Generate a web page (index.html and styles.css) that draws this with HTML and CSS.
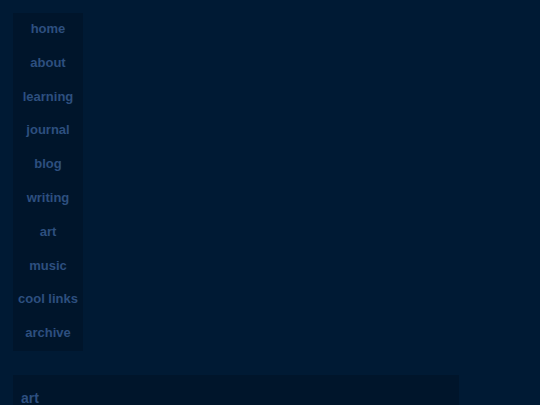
FILE: index.html
```html
<!DOCTYPE html>
<html>
<head>
<meta charset="utf-8">
<link rel="stylesheet" href="styles.css">
</head>
<body>
<div class="page">
  <nav class="nav">
    <a class="nav-item">home</a>
    <a class="nav-item">about</a>
    <a class="nav-item">learning</a>
    <a class="nav-item">journal</a>
    <a class="nav-item">blog</a>
    <a class="nav-item">writing</a>
    <a class="nav-item">art</a>
    <a class="nav-item">music</a>
    <a class="nav-item">cool links</a>
    <a class="nav-item">archive</a>
  </nav>
  <main class="content">
    <h2 class="title">art</h2>
  </main>
</div>
</body>
</html>
```
FILE: styles.css
```css
html, body {
  margin: 0;
  padding: 0;
  background: #001a34;
  height: 100%;
  overflow: hidden;
}
.page {
  padding: 13px;
  display: flex;
  flex-direction: column;
  gap: 24px;
  font-family: "Liberation Sans", Arial, sans-serif;
}
.nav {
  width: 70px;
  background: #00152b;
  display: flex;
  flex-direction: column;
}
.nav-item {
  display: block;
  text-align: center;
  color: #2d4f7f;
  font-weight: bold;
  font-size: 13px;
  line-height: 14px;
  padding: 9px 0 10.8px;
}
.content {
  box-sizing: border-box;
  width: 446px;
  background: #00152b;
  padding: 15px 8px 0;
  height: 60px;
}
.title {
  margin: 0;
  color: #2d4f7f;
  font-size: 14px;
  line-height: 16px;
  font-weight: bold;
}
```
